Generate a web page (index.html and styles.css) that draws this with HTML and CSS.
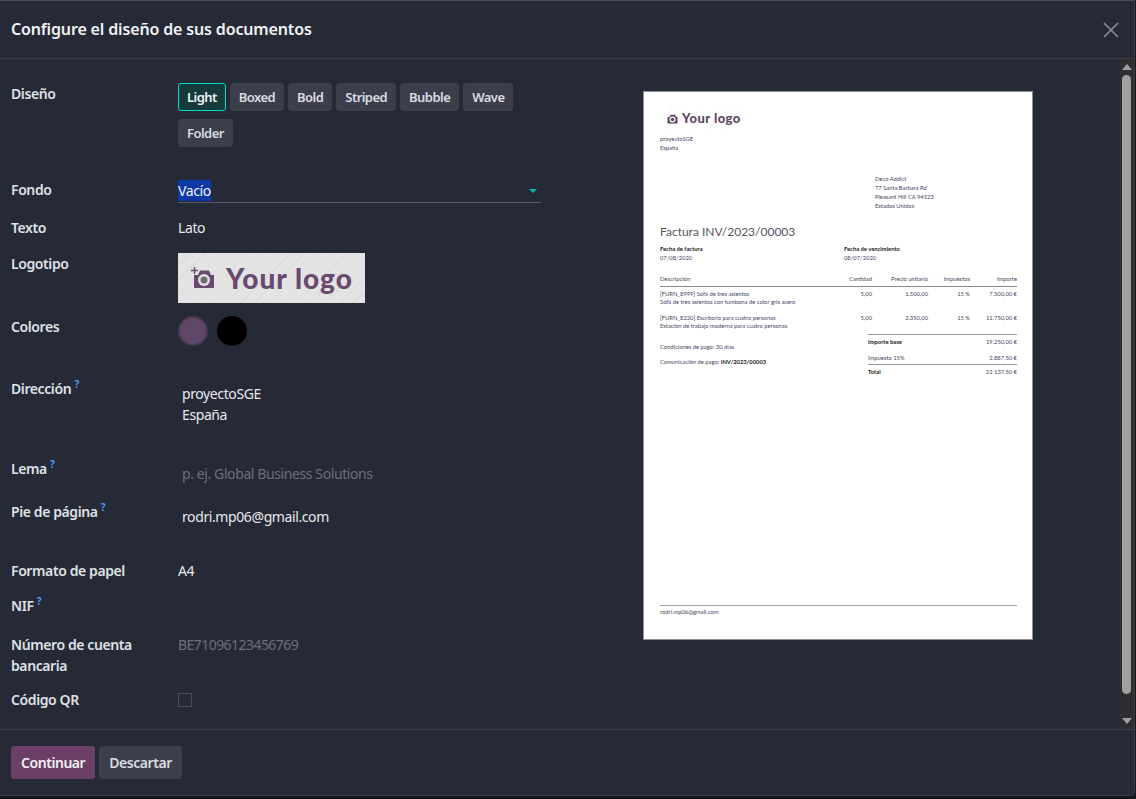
FILE: index.html
```html
<!DOCTYPE html>
<html lang="es">
<head>
    <meta charset="UTF-8">
    <title>Configure el diseño de sus documentos</title>
    <link rel="stylesheet" href="styles.css">
</head>
<body>
    <div class="modal">
        <header class="modal-header">
            <h1>Configure el diseño de sus documentos</h1>
            <svg class="close" width="16" height="16" viewBox="0 0 16 16"><path d="M1 1l14 14M15 1L1 15" stroke="#8b8d96" stroke-width="1.6" fill="none"/></svg>
        </header>

        <div class="modal-body">
            <div class="form">
                <div class="label">Diseño</div>
                <div class="layouts">
                    <button class="chip active">Light</button>
                    <button class="chip">Boxed</button>
                    <button class="chip">Bold</button>
                    <button class="chip">Striped</button>
                    <button class="chip">Bubble</button>
                    <button class="chip">Wave</button>
                    <button class="chip">Folder</button>
                </div>

                <div class="label">Fondo</div>
                <div class="select"><span class="selected">Vacío</span><span class="caret"></span></div>

                <div class="label">Texto</div>
                <div class="value">Lato</div>

                <div class="label">Logotipo</div>
                <div class="logo-box">
                    <svg width="24" height="22" viewBox="0 0 24 22"><path d="M3 8h4l2-4.500h9l2 4.500h3v13H3z" fill="#6a4a70"/><path d="M3.500 0v7M0 3.500h7" stroke="#6a4a70" stroke-width="1.500"/><circle cx="13" cy="13" r="6" fill="#e4e4e4"/><circle cx="13" cy="13" r="3.500" fill="#6f6f6f"/></svg>
                    <span>Your logo</span>
                </div>

                <div class="label">Colores</div>
                <div class="swatches"><span class="swatch purple"></span><span class="swatch black"></span></div>

                <div class="label">Dirección <sup>?</sup></div>
                <div class="value inset">proyectoSGE<br>España</div>

                <div class="label">Lema <sup>?</sup></div>
                <div class="value inset muted">p. ej. Global Business Solutions</div>

                <div class="label">Pie de página <sup>?</sup></div>
                <div class="value inset">rodri.mp06@gmail.com</div>

                <div class="label">Formato de papel</div>
                <div class="value">A4</div>

                <div class="label">NIF <sup>?</sup></div>
                <div class="value"></div>

                <div class="label">Número de cuenta bancaria</div>
                <div class="value muted account">BE71096123456769</div>

                <div class="label">Código QR</div>
                <div class="value"><span class="checkbox"></span></div>
            </div>

            <div class="paper">
                <div class="paper-logo">
                    <svg width="12" height="11" viewBox="0 0 24 22"><path d="M3 8h4l2-4.500h9l2 4.500h3v13H3z" fill="#5f4763"/><circle cx="13" cy="13" r="6" fill="#fff"/><circle cx="13" cy="13" r="3.500" fill="#5f4763"/></svg>
                    <span>Your logo</span>
                </div>
                <div class="company">proyectoSGE<br>España</div>
                <div class="partner">Deco Addict<br>77 Santa Barbara Rd<br>Pleasant Hill CA 94523<br>Estados Unidos</div>
                <h2>Factura INV/2023/00003</h2>
                <div class="dates">
                    <div><b>Fecha de factura</b><br>07/08/2020</div>
                    <div><b>Fecha de vencimiento</b><br>08/07/2020</div>
                </div>
                <table class="lines">
                    <thead>
                        <tr><th>Descripción</th><th>Cantidad</th><th>Precio unitario</th><th>Impuestos</th><th>Importe</th></tr>
                    </thead>
                    <tbody>
                        <tr><td>[FURN_8999] Sofá de tres asientos<br>Sofá de tres asientos con tumbona de color gris acero</td><td>5,00</td><td>1.500,00</td><td>15 %</td><td>7.500,00 €</td></tr>
                        <tr><td>[FURN_8220] Escritorio para cuatro personas<br>Estación de trabajo moderna para cuatro personas</td><td>5,00</td><td>2.350,00</td><td>15 %</td><td>11.750,00 €</td></tr>
                    </tbody>
                </table>
                <div class="summary">
                    <div class="terms">
                        <p>Condiciones de pago: 30 días</p>
                        <p>Comunicación de pago: <b>INV/2023/00003</b></p>
                    </div>
                    <div class="totals">
                        <div class="total-row"><b>Importe base</b><span>19.250,00 €</span></div>
                        <div class="total-row tax"><span>Impuesto 15%</span><span>2.887,50 €</span></div>
                        <div class="total-row final"><b>Total</b><span>22 137,50 €</span></div>
                    </div>
                </div>
                <div class="paper-footer">rodri.mp06@gmail.com</div>
            </div>

            <div class="scrollbar">
                <span class="arrow up"></span>
                <span class="thumb"></span>
                <span class="arrow down"></span>
            </div>
        </div>

        <footer class="modal-footer">
            <button class="btn primary">Continuar</button>
            <button class="btn">Descartar</button>
        </footer>
    </div>
</body>
</html>
```

FILE: styles.css
```css
* {
    box-sizing: border-box;
}
body {
    margin: 0;
    height: 799px;
    overflow: hidden;
    background: #15161b;
    font-family: "Noto Sans", "Open Sans", sans-serif;
    font-size: 14px;
    line-height: 21px;
    letter-spacing: -0.4px;
    color: #e4e6ea;
}
.modal {
    width: 1135px;
    height: 796px;
    display: flex;
    flex-direction: column;
    background: #262a36;
    border-top: 1px solid #4a4c55;
    border-right: 1px solid #3a3d48;
    border-bottom: 1px solid #3a3d48;
    border-bottom-right-radius: 5px;
}
.modal-header {
    height: 58px;
    flex: none;
    display: flex;
    align-items: center;
    justify-content: space-between;
    padding: 0 15px 0 11px;
    border-bottom: 1px solid #3c3f4b;
}
.modal-header h1 {
    margin: 0;
    font-size: 16px;
    font-weight: 600;
    letter-spacing: -0.15px;
    color: #f1f2f4;
}
.modal-body {
    flex: 1;
    display: flex;
    min-height: 0;
}
.form {
    width: 530px;
    margin-left: 11px;
    padding-top: 24px;
    display: grid;
    grid-template-columns: 167px 1fr;
    grid-template-rows: 96px 38px 36px 63px 62px 80px 43px 59px 35px 39px 55px 30px;
}
.label {
    font-weight: 600;
    color: #dfe1e5;
    padding-right: 30px;
}
.label sup {
    font-size: 10px;
    font-weight: 700;
    line-height: 0;
    color: #4a9dff;
}
.value {
    color: #e8e9ec;
}
.inset {
    padding-left: 4px;
    padding-top: 5px;
}
.muted {
    color: #6c6f7b;
}
.account {
    letter-spacing: -0.55px;
}
.layouts {
    display: flex;
    flex-wrap: wrap;
    align-content: flex-start;
    gap: 8px 4px;
}
.chip {
    height: 28px;
    padding: 0 8px;
    border: 1px solid #3c3e4b;
    border-radius: 3px;
    background: #3c3e4b;
    color: #dadce1;
    font: 600 13px "Noto Sans", sans-serif;
    letter-spacing: -0.55px;
}
.chip.active {
    background: #173b3d;
    border-color: #00dcc8;
    color: #f2f3f5;
}
.select {
    height: 24px;
    display: flex;
    align-items: center;
    justify-content: space-between;
    border-bottom: 1px solid #5a5d69;
    padding-right: 4px;
}
.selected {
    background: #0b3aa6;
    color: #f2f4f8;
}
.caret {
    border-left: 4px solid transparent;
    border-right: 4px solid transparent;
    border-top: 4px solid #00b8a6;
}
.logo-box {
    width: 187px;
    height: 50px;
    display: flex;
    align-items: center;
    gap: 11px;
    padding-left: 13px;
    background: repeating-linear-gradient(135deg, #e4e4e4 0 9px, #dcdcdc 9px 10px);
    color: #6a4a70;
    font: 900 28px/1 "Lato", sans-serif;
    letter-spacing: 1px;
}
.swatches {
    display: flex;
    gap: 9px;
}
.swatch {
    width: 30px;
    height: 30px;
    border-radius: 50%;
}
.swatch.purple {
    background: #5f4767;
    border: 2px solid #4a3a55;
}
.swatch.black {
    background: #000;
}
.checkbox {
    display: block;
    width: 14px;
    height: 14px;
    margin-top: 4px;
    border: 1px solid #4a4d59;
}

/* vista previa de la factura */
.paper {
    width: 390px;
    height: 549px;
    margin: 32px 0 0 102px;
    padding: 0 15px 0 16px;
    flex: none;
    position: relative;
    background: #fff;
    border: 1px solid #8e9096;
    color: #3f4660;
    font-family: "Lato", sans-serif;
    font-size: 5.800px;
    line-height: 8.500px;
    letter-spacing: 0;
}
.paper-logo {
    display: flex;
    align-items: center;
    gap: 4px;
    width: 90px;
    height: 23px;
    margin-top: 15px;
    padding-left: 6px;
    background: repeating-linear-gradient(135deg, #fff 0 9px, #f8f8f8 9px 10px);
    color: #5f4763;
    font-size: 13px;
    font-weight: 900;
    letter-spacing: 0.45px;
}
.company {
    margin-top: 5px;
}
.partner {
    margin: 22px 0 0 215px;
    line-height: 9px;
}
h2 {
    margin: 14px 0 0;
    font-size: 12px;
    line-height: 16px;
    font-weight: 400;
    color: #55555f;
}
.dates {
    display: grid;
    grid-template-columns: 184px 1fr;
    margin-top: 5px;
}
.dates b {
    color: #222;
}
.lines {
    width: 100%;
    margin-top: 13px;
    border-collapse: collapse;
}
.lines th {
    font-weight: 400;
    padding: 0 0 2px;
    text-align: right;
    border-bottom: 1.500px solid #8a8a8a;
}
.lines td {
    padding: 3px 0 4px;
    text-align: right;
    vertical-align: top;
}
.lines th:first-child, .lines td:first-child {
    text-align: left;
}
.lines th:nth-child(2) { width: 50px; }
.lines th:nth-child(3) { width: 56px; }
.lines th:nth-child(4) { width: 42px; }
.lines th:nth-child(5) { width: 47px; }
.summary {
    display: flex;
    justify-content: space-between;
}
.terms p {
    margin: 8px 0 0;
}
.terms p + p {
    margin-top: 7px;
}
.terms b {
    color: #222;
}
.totals {
    width: 149px;
    margin-top: -1px;
    border-top: 1px solid #999;
}
.total-row {
    display: flex;
    justify-content: space-between;
    padding-top: 3px;
}
.total-row b {
    color: #222;
}
.total-row.tax {
    padding-top: 8px;
    padding-bottom: 1px;
    border-bottom: 1px solid #999;
}
.paper-footer {
    position: absolute;
    left: 16px;
    right: 15px;
    top: 513px;
    border-top: 1px solid #a0a0a0;
    padding-top: 2px;
}

/* barra de desplazamiento */
.scrollbar {
    width: 15px;
    margin-left: auto;
    display: flex;
    flex-direction: column;
    align-items: center;
    background: #2e2e30;
    padding: 5px 0;
}
.thumb {
    flex: 1;
    width: 9px;
    margin: 5px 0 24px;
    border-radius: 5px;
    background: #a0a0a0;
}
.arrow {
    flex: none;
    border-left: 5px solid transparent;
    border-right: 5px solid transparent;
}
.arrow.up {
    border-bottom: 6px solid #a0a0a0;
}
.arrow.down {
    border-top: 6px solid #a0a0a0;
}
.modal-footer {
    height: 66px;
    flex: none;
    display: flex;
    gap: 4px;
    padding: 16px 11px;
    border-top: 1px solid #3c3f4b;
}
.btn {
    height: 33px;
    padding: 0 10px;
    border: none;
    border-radius: 3px;
    background: #3c3e4b;
    color: #dadce1;
    font: 600 14px "Noto Sans", sans-serif;
    letter-spacing: -0.45px;
}
.btn.primary {
    background: #6b3f66;
    color: #f2f0f2;
}
```
